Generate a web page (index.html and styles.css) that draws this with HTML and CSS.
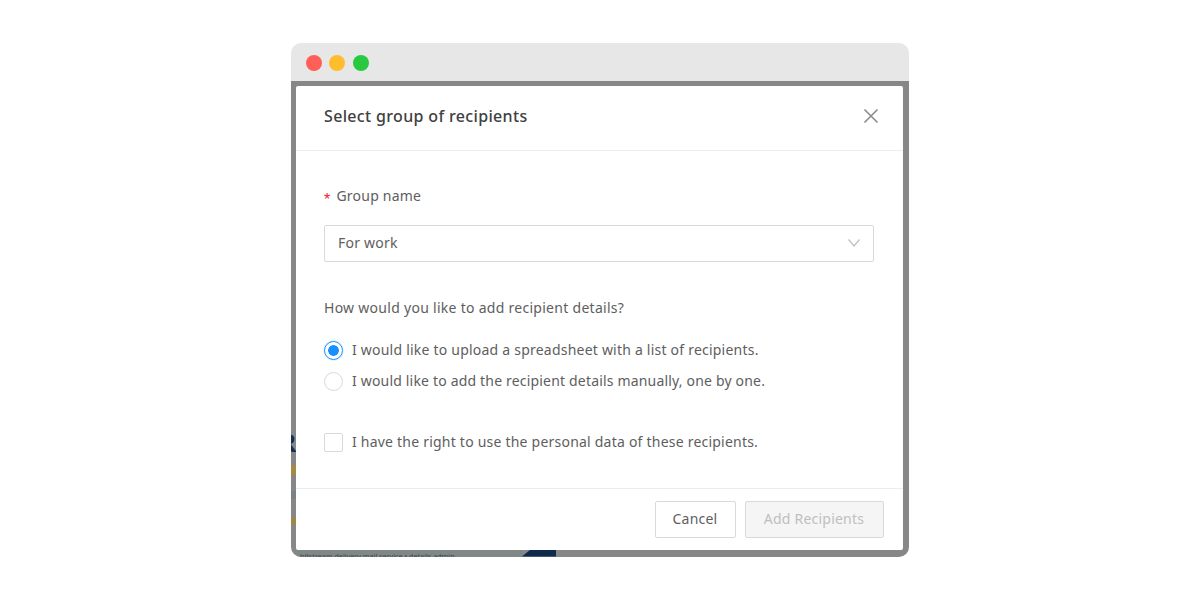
FILE: index.html
```html
<!DOCTYPE html>
<html lang="en">
<head>
<meta charset="utf-8">
<title>Select group of recipients</title>
<link rel="stylesheet" href="styles.css">
</head>
<body>
<div class="window">
  <div class="titlebar">
    <span class="dot dot-red"></span>
    <span class="dot dot-yellow"></span>
    <span class="dot dot-green"></span>
  </div>
  <div class="backdrop">
    <span class="bg-letter">R</span>
    <span class="bg-bit bg-bit-a"></span>
    <span class="bg-bit bg-bit-b"></span>
    <span class="bg-bit bg-bit-c"></span>
    <span class="bg-strip"></span>
    <span class="bg-navy"></span>
    <span class="bg-bottom-text">bitstream delivery mail service • details admin</span>
    <div class="modal">
      <header class="modal-header">
        <h1 class="modal-title">Select group of recipients</h1>
        <svg class="close" width="16" height="16" viewBox="0 0 16 16" aria-hidden="true"><path d="M1.5 1.5 14.5 14.5M14.5 1.5 1.5 14.5"/></svg>
      </header>
      <main class="modal-body">
        <div class="label"><span class="req">*</span>Group name</div>
        <div class="select">
          <span>For work</span>
          <svg class="chevron" width="14" height="10" viewBox="0 0 14 10" aria-hidden="true"><path d="M1.5 1.5 7 8 12.5 1.5"/></svg>
        </div>
        <div class="question">How would you like to add recipient details?</div>
        <div class="options">
          <div class="option"><span class="radio radio-on"></span>I would like to upload a spreadsheet with a list of recipients.</div>
          <div class="option"><span class="radio"></span><span class="tight">I would like to add the recipient details manually, one by one.</span></div>
        </div>
        <div class="option consent"><span class="checkbox"></span>I have the right to use the personal data of these recipients.</div>
      </main>
      <footer class="modal-footer">
        <button class="btn" type="button">Cancel</button>
        <button class="btn btn-disabled" type="button" disabled>Add Recipients</button>
      </footer>
    </div>
  </div>
</div>
</body>
</html>
```
FILE: styles.css
```css
* { box-sizing: border-box; }
html, body { margin: 0; height: 100%; background: #fff; }
body {
  font-family: "Noto Sans", "Open Sans", sans-serif;
  color: #5e5e5e;
  font-size: 14px;
  letter-spacing: 0.22px;
  padding-top: 43px;
  overflow: hidden;
}
.window {
  width: 618px;
  height: 513.5px;
  margin: 0 auto;
  border-radius: 10px;
  overflow: hidden;
  display: flex;
  flex-direction: column;
}
.titlebar {
  height: 37.5px;
  background: #e7e7e7;
  display: flex;
  align-items: center;
  gap: 7.3px;
  padding: 2px 0 0 15px;
  flex: none;
}
.dot { width: 16px; height: 16px; border-radius: 50%; }
.dot-red { background: #ff5f57; }
.dot-yellow { background: #ffbd2e; }
.dot-green { background: #28c940; }
.backdrop {
  position: relative;
  flex: 1;
  background: #878787;
  padding: 5.5px 6.5px 6.5px 5px;
  display: flex;
}
.bg-letter {
  position: absolute;
  left: -14px;
  top: 346px;
  font: bold 28px/32px "Liberation Serif", serif;
  letter-spacing: 0;
  color: #1c2c4a;
}
.bg-bit { position: absolute; left: 0; width: 6px; }
.bg-bit-a { top: 384px; height: 10px; background: #a58a45; }
.bg-bit-b { top: 436px; height: 8px; background: #9c8848; }
.bg-bit-c { top: 410px; height: 8px; background: #7c8388; }
.bg-strip { position: absolute; left: 6px; width: 226px; bottom: 0; height: 7px; background: #7f8886; }
.bg-navy { position: absolute; left: 231px; bottom: 0; width: 34px; height: 7px; background: #0f2a4a; clip-path: polygon(25% 0, 100% 0, 100% 100%, 0 100%); }
.bg-bottom-text {
  position: absolute;
  left: 9px;
  bottom: -4px;
  font-size: 7.2px;
  line-height: 10px;
  letter-spacing: 0;
  color: #3f4a52;
  white-space: nowrap;
}
.modal {
  position: relative;
  flex: 1;
  background: #fff;
  border-radius: 2px;
  display: flex;
  flex-direction: column;
}
.modal-header {
  height: 65px;
  padding: 0 24px 4px 28px;
  border-bottom: 1px solid #ededed;
  display: flex;
  align-items: center;
  justify-content: space-between;
  flex: none;
}
.modal-title {
  margin: 0;
  font-size: 16px;
  font-weight: 500;
  letter-spacing: 0.34px;
  color: #404040;
  line-height: 22px;
}
.close { fill: none; stroke: #8c8c8c; stroke-width: 1.6; }
.modal-body {
  flex: 1;
  padding: 34px 29px 0 28px;
}
.label { height: 22px; line-height: 22px; }
.req {
  color: #f5222d;
  margin-right: 6px;
  font-family: "Liberation Sans", sans-serif;
  font-size: 16px;
  vertical-align: -4px;
  line-height: 1;
}
.select {
  margin-top: 18px;
  height: 37px;
  border: 1px solid #d9d9d9;
  border-radius: 2px;
  padding: 0 12px 2px 13px;
  display: flex;
  align-items: center;
  justify-content: space-between;
}
.chevron { fill: none; stroke: #bfbfbf; stroke-width: 1.2; }
.question { margin-top: 35px; line-height: 22px; letter-spacing: 0.28px; }
.options { margin-top: 20px; display: flex; flex-direction: column; gap: 9px; }
.option { display: flex; align-items: center; gap: 9px; line-height: 22px; }
.tight { letter-spacing: 0.18px; }
.radio {
  width: 19px; height: 19px;
  border: 1px solid #d9d9d9;
  border-radius: 50%;
  flex: none;
}
.radio-on {
  border: 1.5px solid #1890ff;
  background: radial-gradient(circle, #1890ff 0, #1890ff 5px, #fff 5.6px);
  box-shadow: 0 0 0 1px rgba(24,144,255,.12);
}
.checkbox {
  width: 19px; height: 19px;
  border: 1px solid #d9d9d9;
  border-radius: 2px;
  flex: none;
}
.consent { margin-top: 39px; }
.modal-footer {
  height: 62px;
  border-top: 1px solid #ededed;
  padding: 12px 19px 0 0;
  display: flex;
  justify-content: flex-end;
  align-items: flex-start;
  gap: 9px;
  flex: none;
}
.btn {
  height: 37px;
  width: 81px;
  padding: 0 0 2px;
  font: inherit;
  letter-spacing: inherit;
  color: #5e5e5e;
  background: #fff;
  border: 1px solid #d9d9d9;
  border-radius: 2px;
}
.btn-disabled {
  width: 139px;
  color: #bfbfbf;
  background: #f5f5f5;
}
```
